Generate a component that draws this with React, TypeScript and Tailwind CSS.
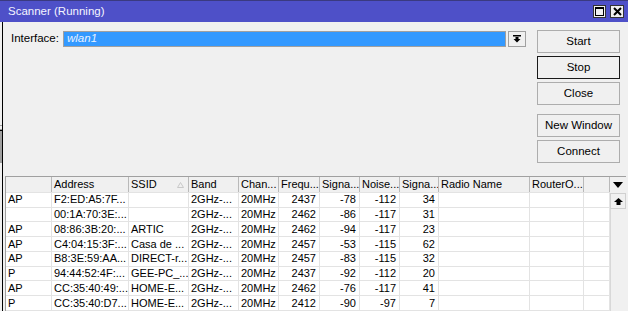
import React from "react";

const cols = [
  { w: 46, label: "", align: "l" },
  { w: 77, label: "Address", align: "l" },
  { w: 60, label: "SSID", align: "l" },
  { w: 50, label: "Band", align: "l" },
  { w: 40, label: "Chan...", align: "l" },
  { w: 41, label: "Frequ...", align: "r" },
  { w: 40, label: "Signa...", align: "r" },
  { w: 40, label: "Noise...", align: "r" },
  { w: 39, label: "Signa...", align: "r" },
  { w: 91, label: "Radio Name", align: "l" },
  { w: 54, label: "RouterO...", align: "l" },
  { w: 26, label: "", align: "l" },
];

const rows = [
  ["AP", "F2:ED:A5:7F...", "", "2GHz-...", "20MHz", "2437", "-78", "-112", "34", "", "", ""],
  ["", "00:1A:70:3E:...", "", "2GHz-...", "20MHz", "2462", "-86", "-117", "31", "", "", ""],
  ["AP", "08:86:3B:20:...", "ARTIC", "2GHz-...", "20MHz", "2462", "-94", "-117", "23", "", "", ""],
  ["AP", "C4:04:15:3F:...", "Casa de ...", "2GHz-...", "20MHz", "2457", "-53", "-115", "62", "", "", ""],
  ["AP", "B8:3E:59:AA...", "DIRECT-r...", "2GHz-...", "20MHz", "2457", "-83", "-115", "32", "", "", ""],
  ["P", "94:44:52:4F:...", "GEE-PC_...", "2GHz-...", "20MHz", "2437", "-92", "-112", "20", "", "", ""],
  ["AP", "CC:35:40:49:...", "HOME-E...", "2GHz-...", "20MHz", "2462", "-76", "-117", "41", "", "", ""],
  ["P", "CC:35:40:D7...", "HOME-E...", "2GHz-...", "20MHz", "2412", "-90", "-97", "7", "", "", ""],
];

function Btn({ label, focused }: { label: string; focused?: boolean }) {
  return (
    <div
      className={
        "w-[83px] h-[23px] flex items-center justify-center bg-[#f0f0f0] border text-[11.5px] text-black " +
        (focused ? "border-[#1a1a1a]" : "border-[#adadad]")
      }
    >
      {label}
    </div>
  );
}

export default function App() {
  return (
    <div
      className="w-[628px] h-[311px] bg-[#f0f0f0] overflow-hidden flex flex-col text-black"
      style={{ fontFamily: '"Liberation Sans", Arial, sans-serif' }}
    >
      {/* title bar */}
      <div className="h-[22px] bg-[#4e50c8] border-t border-[#3a3a80] flex items-center pl-[8px] pr-[4px]">
        <div className="text-[11.5px] text-[#f4f4ff] flex-1 leading-none">Scanner (Running)</div>
        <div className="flex gap-[4px] items-center">
          <div className="w-[13px] h-[13px] bg-[#f0f0f0] border border-[#333] flex items-center justify-center">
            <div className="w-[9px] h-[9px] border border-black border-t-2" />
          </div>
          <div className="w-[14px] h-[13px] bg-[#f0f0f0] border border-[#333] flex items-center justify-center">
            <svg width="9" height="9" viewBox="0 0 9 9">
              <path d="M1 1 L8 8 M8 1 L1 8" stroke="black" strokeWidth="2" />
            </svg>
          </div>
        </div>
      </div>

      <div className="flex flex-1 min-h-0">
        {/* left strip (background window) */}
        <div className="w-[3px] flex">
          <div className="w-[2px] flex flex-col">
            <div className="h-[103px]" />
            <div className="h-px bg-[#a0a0a0]" />
            <div className="h-[3px]" />
            <div className="h-px bg-[#a0a0a0]" />
            <div className="h-[33px] bg-[#a0a0a0] border-t border-black" />
          </div>
          <div className="w-px bg-black" />
        </div>

        <div className="flex-1 flex flex-col min-w-0">
          {/* top */}
          <div className="h-[154px] flex pt-[8px]">
            <div className="flex items-start pl-[8px] pt-[1px]">
              <div className="w-[52px] h-[16px] flex items-center text-[11.5px]">Interface:</div>
              <div className="w-[443px] h-[16px] bg-[#3399ff] border border-[#a0a0a0] flex items-center pl-[3px]">
                <span className="text-[11.5px] italic text-[#e8f2ff] leading-none">wlan1</span>
              </div>
              <div className="ml-[2px] w-[18px] h-[16px] bg-[#f0f0f0] border border-[#a0a0a0] flex items-center justify-center">
                <svg width="8" height="8" viewBox="0 0 8 8">
                  <rect x="0" y="0" width="8" height="1.5" fill="black" />
                  <path d="M2.5 2 H5.5 V4 H7.5 L4 7.5 L0.5 4 H2.5 Z" fill="black" />
                </svg>
              </div>
            </div>
            <div className="ml-[11px] flex flex-col gap-[3px]">
              <Btn label="Start" />
              <Btn label="Stop" focused />
              <Btn label="Close" />
              <div className="h-[3px]" />
              <Btn label="New Window" />
              <Btn label="Connect" />
            </div>
          </div>

          {/* table */}
          <div className="ml-[2px] w-[621px] flex-1 flex border-l border-t border-[#a0a0a0] text-[11px] min-h-0">
            <div className="flex flex-col">
              <div className="flex h-[16px] bg-[#f0f0f0] border-b border-[#e3e3e3]">
                {cols.map((c, i) => (
                  <div
                    key={i}
                    style={{ width: c.w }}
                    className="relative h-full border-r border-[#b9b9b9] flex items-center px-[2px] leading-none whitespace-nowrap overflow-hidden"
                  >
                    {c.label}
                    {i === 2 && (
                      <svg className="absolute right-[4px] top-[5px]" width="7" height="6" viewBox="0 0 7 6">
                        <path d="M3.5 0.5 L6.5 5.5 H0.5 Z" fill="none" stroke="#c8c8c8" />
                      </svg>
                    )}
                  </div>
                ))}
              </div>
              {rows.map((r, ri) => (
                <div key={ri} className="flex h-[15px] bg-white border-b border-[#e3e3e3]">
                  {r.map((v, ci) => (
                    <div
                      key={ci}
                      style={{ width: cols[ci].w }}
                      className={
                        "h-full border-r border-[#e3e3e3] flex items-center leading-none whitespace-nowrap overflow-hidden " +
                        (cols[ci].align === "r" ? "justify-end pr-[3px]" : "pl-[2px]")
                      }
                    >
                      {v}
                    </div>
                  ))}
                </div>
              ))}
            </div>
            {/* scrollbar */}
            <div className="w-[17px] flex flex-col">
              <div className="h-[16px] bg-[#f0f0f0] flex items-center justify-center">
                <svg width="10" height="6" viewBox="0 0 10 6">
                  <path d="M0 0 H10 L5 6 Z" fill="black" />
                </svg>
              </div>
              <div className="h-[16px] bg-[#f0f0f0] border border-[#d0d0d0] flex items-center justify-center">
                <svg width="9" height="7" viewBox="0 0 9 7">
                  <path d="M4.5 0 L9 4 H6.5 V7 H2.5 V4 H0 Z" fill="black" />
                </svg>
              </div>
              <div className="flex-1 bg-[#f0f0f0] border-l border-[#d8d8d8]" />
            </div>
          </div>
        </div>
      </div>
    </div>
  );
}
